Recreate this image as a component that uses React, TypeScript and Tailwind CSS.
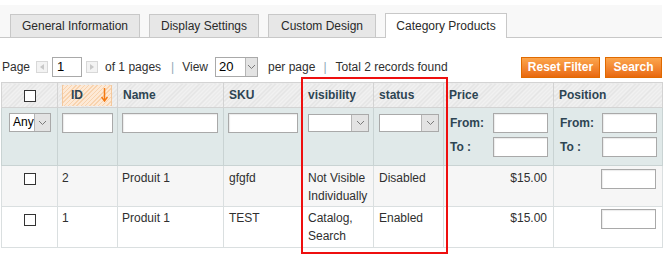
import React from "react";

const hatch =
  "bg-[#ececec] bg-[image:repeating-linear-gradient(135deg,#e2e2e2_0px,#e2e2e2_1px,#f1f1f1_1px,#f1f1f1_3px)]";

function Chevron() {
  return (
    <svg width="9" height="6" viewBox="0 0 9 6">
      <path d="M1 1 L4.5 4.5 L8 1" fill="none" stroke="#7a7a7a" strokeWidth="1" />
    </svg>
  );
}

function Box({ className }: { className: string }) {
  return <div className={"bg-white border border-[#a9a9a9] shadow-[inset_1px_1px_1px_rgba(0,0,0,0.08)] " + className} />;
}

function FilterSelect({ className, text, btn }: { className: string; text?: string; btn: string }) {
  return (
    <div className={"flex bg-white border border-[#a9a9a9] " + className}>
      <div className="flex-1 whitespace-nowrap text-[12px] leading-[17px] pl-[3px] text-black">{text}</div>
      <div className={"bg-[#e3e3e3] border-l border-[#b5b5b5] flex items-center justify-center shrink-0 " + btn}>
        <Chevron />
      </div>
    </div>
  );
}

function CheckBox() {
  return <div className="w-[12px] h-[12px] border border-[#333] bg-white mx-auto" />;
}

function Tab({ className, children, active }: { className: string; children: React.ReactNode; active?: boolean }) {
  return (
    <div
      className={
        "flex items-center justify-center border border-b-0 border-[#c8c8c8] text-[#2a2a2a] " +
        (active ? "bg-white h-[25px] -mb-px " : "bg-[#e7e7e7] h-[23px] ") +
        className
      }
    >
      {children}
    </div>
  );
}

function Arrow({ dir }: { dir: "l" | "r" }) {
  return (
    <div className="w-[12px] h-[12px] border border-[#d8d8d8] bg-[#f3f3f3] flex items-center justify-center">
      <svg width="4" height="6" viewBox="0 0 4 6">
        {dir === "l" ? <path d="M4 0 L0 3 L4 6 Z" fill="#c8c8c8" /> : <path d="M0 0 L4 3 L0 6 Z" fill="#c8c8c8" />}
      </svg>
    </div>
  );
}

function RangeFilter() {
  return (
    <div className="flex flex-col gap-[4px] font-bold text-[#2e4553]">
      <div className="flex items-center justify-between">
        <span>From:</span>
        <Box className="w-[55px] h-[20px]" />
      </div>
      <div className="flex items-center justify-between">
        <span>To :</span>
        <Box className="w-[55px] h-[20px]" />
      </div>
    </div>
  );
}

export default function App() {
  return (
    <div className="relative w-[671px] h-[262px] bg-white overflow-hidden font-['Liberation_Sans',Arial,sans-serif] text-[12px] text-[#2f2f2f]">
      {/* tabs */}
      <div className="pt-[5px]">
        <div className="w-[662px] h-[33px] bg-[#f8f8f8] border-b border-[#c8c8c8] flex items-end pl-[10px] gap-[9px]">
          <Tab className="w-[130px]">General Information</Tab>
          <Tab className="w-[110px]">Display Settings</Tab>
          <Tab className="w-[108px]">Custom Design</Tab>
          <Tab className="w-[122px]" active>
            Category Products
          </Tab>
        </div>
      </div>

      {/* pager */}
      <div className="mt-[18px] w-[662px] h-[22px] flex items-center">
        <span className="ml-[2px]">Page</span>
        <div className="ml-[6px]">
          <Arrow dir="l" />
        </div>
        <div className="ml-[4px] w-[30px] h-[20px] bg-white border border-[#a9a9a9] text-[13px] leading-[18px] pl-[4px] text-black">1</div>
        <div className="ml-[4px]">
          <Arrow dir="r" />
        </div>
        <span className="ml-[7px]">of 1 pages</span>
        <span className="ml-[10px] text-[#8fa9b8]">|</span>
        <span className="ml-[8px]">View</span>
        <div className="ml-[7px] flex w-[43px] h-[20px] bg-white border border-[#a9a9a9]">
          <div className="flex-1 text-[13px] leading-[18px] pl-[3px] text-black">20</div>
          <div className="w-[12px] bg-[#e3e3e3] border-l border-[#b5b5b5] flex items-center justify-center">
            <Chevron />
          </div>
        </div>
        <span className="ml-[10px]">per page</span>
        <span className="ml-[8px] text-[#8fa9b8]">|</span>
        <span className="ml-[9px]">Total 2 records found</span>
        <div className="ml-auto flex gap-[5px]">
          <button className="w-[79px] h-[21px] border border-[#e06a00] bg-gradient-to-b from-[#fca54b] to-[#e8680b] text-white font-bold text-[12px]">
            Reset Filter
          </button>
          <button className="w-[57px] h-[21px] border border-[#e06a00] bg-gradient-to-b from-[#fca54b] to-[#e8680b] text-white font-bold text-[12px]">
            Search
          </button>
        </div>
      </div>

      {/* grid */}
      <table className="mt-[4px] ml-[1px] w-[661px] table-fixed border-collapse">
        <colgroup>
          <col className="w-[56px]" />
          <col className="w-[60px]" />
          <col className="w-[106px]" />
          <col className="w-[78px]" />
          <col className="w-[72px]" />
          <col className="w-[70px]" />
          <col className="w-[110px]" />
          <col className="w-[109px]" />
        </colgroup>
        <thead>
          <tr className="h-[25px] text-left font-bold text-[#2e4553]">
            <th className={"border border-[#d3d3d3] p-0 pt-[2px] " + hatch}>
              <CheckBox />
            </th>
            <th className={"border border-[#d3d3d3] p-0 " + hatch}>
              <div className="ml-[4px] mr-[5px] h-[21px] flex items-center justify-between pl-[8px] pr-[3px] border-x border-[#f3c79c] bg-[#fbe3cb] bg-[image:repeating-linear-gradient(135deg,#f8d3ae_0px,#f8d3ae_1px,#fde9d6_1px,#fde9d6_3px)]">
                <span>ID</span>
                <svg width="7" height="14" viewBox="0 0 7 14">
                  <path d="M3.5 0 V12" stroke="#f57a12" strokeWidth="1.5" />
                  <path d="M0.5 9 L3.5 13 L6.5 9" fill="none" stroke="#f57a12" strokeWidth="1.5" />
                </svg>
              </div>
            </th>
            <th className={"border border-[#d3d3d3] px-[5px] font-bold " + hatch}>Name</th>
            <th className={"border border-[#d3d3d3] px-[5px] font-bold " + hatch}>SKU</th>
            <th className={"border border-[#d3d3d3] px-[6px] font-bold " + hatch}>visibility</th>
            <th className={"border border-[#d3d3d3] px-[5px] font-bold " + hatch}>status</th>
            <th className={"border border-[#d3d3d3] px-[5px] font-bold " + hatch}>Price</th>
            <th className={"border border-[#d3d3d3] px-[5px] font-bold " + hatch}>Position</th>
          </tr>
        </thead>
        <tbody>
          <tr className="h-[58px] bg-[#e0e9e9] align-top">
            <td className="border border-[#c9d3d3] pt-[5px] pl-[7px]">
              <FilterSelect className="w-[42px] h-[19px]" text="Any" btn="w-[16px]" />
            </td>
            <td className="border border-[#c9d3d3] pt-[5px] pl-[4px]">
              <Box className="w-[51px] h-[20px]" />
            </td>
            <td className="border border-[#c9d3d3] pt-[5px] pl-[4px]">
              <Box className="w-[96px] h-[20px]" />
            </td>
            <td className="border border-[#c9d3d3] pt-[5px] pl-[4px]">
              <Box className="w-[70px] h-[20px]" />
            </td>
            <td className="border border-[#c9d3d3] pt-[6px] pl-[6px]">
              <FilterSelect className="w-[61px] h-[18px]" btn="w-[17px]" />
            </td>
            <td className="border border-[#c9d3d3] pt-[6px] pl-[5px]">
              <FilterSelect className="w-[60px] h-[18px]" btn="w-[17px]" />
            </td>
            <td className="border border-[#c9d3d3] pt-[5px] pl-[6px] pr-[5px]">
              <RangeFilter />
            </td>
            <td className="border border-[#c9d3d3] pt-[5px] pl-[6px] pr-[5px]">
              <RangeFilter />
            </td>
          </tr>
          <tr className="h-[41px] bg-[#f6f6f6] align-top leading-[18px]">
            <td className="border border-[#dadfe0] pt-[7px]">
              <CheckBox />
            </td>
            <td className="border border-[#dadfe0] pt-[3px] px-[4px]">2</td>
            <td className="border border-[#dadfe0] pt-[3px] px-[4px]">Produit 1</td>
            <td className="border border-[#dadfe0] pt-[3px] px-[5px]">gfgfd</td>
            <td className="border border-[#dadfe0] pt-[3px] px-[6px]">Not Visible Individually</td>
            <td className="border border-[#dadfe0] pt-[3px] px-[5px]">Disabled</td>
            <td className="border border-[#dadfe0] pt-[3px] px-[6px] text-right">$15.00</td>
            <td className="border border-[#dadfe0] pt-[3px] pr-[6px]">
              <Box className="ml-auto w-[55px] h-[20px]" />
            </td>
          </tr>
          <tr className="h-[41px] bg-white align-top leading-[18px]">
            <td className="border border-[#dadfe0] pt-[7px]">
              <CheckBox />
            </td>
            <td className="border border-[#dadfe0] pt-[2px] px-[4px]">1</td>
            <td className="border border-[#dadfe0] pt-[2px] px-[4px]">Produit 1</td>
            <td className="border border-[#dadfe0] pt-[2px] px-[5px]">TEST</td>
            <td className="border border-[#dadfe0] pt-[2px] px-[6px]">Catalog, Search</td>
            <td className="border border-[#dadfe0] pt-[2px] px-[5px]">Enabled</td>
            <td className="border border-[#dadfe0] pt-[2px] px-[6px] text-right">$15.00</td>
            <td className="border border-[#dadfe0] pt-[2px] pr-[6px]">
              <Box className="ml-auto w-[55px] h-[20px]" />
            </td>
          </tr>
        </tbody>
      </table>

      {/* red highlight overlay */}
      <div className="absolute left-[301px] top-[77px] w-[147px] h-[177px] border-2 border-[#ee0f0f] pointer-events-none" />
    </div>
  );
}
